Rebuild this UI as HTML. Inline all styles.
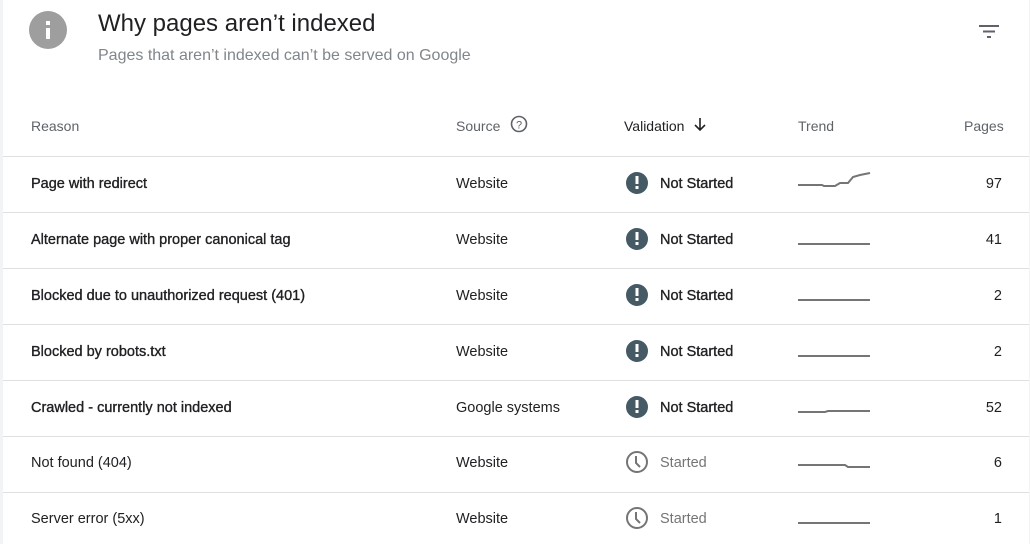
<!DOCTYPE html>
<html><head><meta charset="utf-8"><style>
*{margin:0;padding:0;box-sizing:border-box}
body{width:1030px;height:544px;background:#f1f3f4;font-family:"Liberation Sans",Arial,sans-serif;position:relative;overflow:hidden}
.card{position:absolute;left:3px;top:0;width:1026px;height:544px;background:#fff}
.t{position:absolute;white-space:nowrap;line-height:1}
.h{font-size:14px;color:#5f6368}
.r{font-size:14.5px;color:#202124}
.b{color:#202124;-webkit-text-stroke:0.35px #202124}
.g{color:#757575}
svg{position:absolute;left:0;top:0}
</style></head><body>
<div class="card"></div>
<svg width="1030" height="544">
<circle cx="48" cy="30" r="19" fill="#9e9e9e"/>
<rect x="46" y="28" width="4" height="11" fill="#fff"/>
<rect x="46" y="21" width="4" height="4" fill="#fff"/>
<g fill="#5f6368"><rect x="979" y="25" width="20" height="2"/><rect x="983" y="30.5" width="12" height="2"/><rect x="987" y="36" width="4" height="2"/></g>
<circle cx="519" cy="124" r="7.5" fill="none" stroke="#5f6368" stroke-width="1.6"/>
<text x="519" y="128.5" font-size="11" fill="#5f6368" text-anchor="middle" font-family="Liberation Sans">?</text>
<path d="M700 118v12M695 125l5 5 5-5" fill="none" stroke="#202124" stroke-width="1.6"/>
<g fill="#e0e0e0">
<rect x="3" y="156" width="1026" height="1"/><rect x="3" y="212" width="1026" height="1"/><rect x="3" y="268" width="1026" height="1"/><rect x="3" y="324" width="1026" height="1"/><rect x="3" y="380" width="1026" height="1"/><rect x="3" y="436" width="1026" height="1"/><rect x="3" y="492" width="1026" height="1"/>
</g>
<g>
<circle cx="637" cy="183" r="11" fill="#455a64"/><circle cx="637" cy="239" r="11" fill="#455a64"/><circle cx="637" cy="295" r="11" fill="#455a64"/><circle cx="637" cy="351" r="11" fill="#455a64"/><circle cx="637" cy="407" r="11" fill="#455a64"/>
</g>
<g fill="#fff">
<rect x="635.5" y="176" width="3" height="8"/><rect x="635.5" y="186" width="3" height="3"/>
<rect x="635.5" y="232" width="3" height="8"/><rect x="635.5" y="242" width="3" height="3"/>
<rect x="635.5" y="288" width="3" height="8"/><rect x="635.5" y="298" width="3" height="3"/>
<rect x="635.5" y="344" width="3" height="8"/><rect x="635.5" y="354" width="3" height="3"/>
<rect x="635.5" y="400" width="3" height="8"/><rect x="635.5" y="410" width="3" height="3"/>
</g>
<g fill="none" stroke="#757575" stroke-width="2">
<circle cx="637" cy="462" r="10"/><path d="M636 456v7l4 4"/>
<circle cx="637" cy="518" r="10"/><path d="M636 512v7l4 4"/>
</g>
<g fill="none" stroke="#757575" stroke-width="2">
<path d="M798 185H822L824 186H835L840 183H848L853 177L860 175L870 173"/>
<path d="M798 244H870"/>
<path d="M798 300H870"/>
<path d="M798 356H870"/>
<path d="M798 412H825L828 411H870"/>
<path d="M798 465H845L848 467H870"/>
<path d="M798 523H870"/>
</g>
</svg>
<div class="t" style="left:98px;top:12px;font-size:24px;color:#202124">Why pages aren’t indexed</div>
<div class="t" style="left:98px;top:48px;font-size:16px;color:#80868b">Pages that aren’t indexed can’t be served on Google</div>

<div class="t h" style="left:31px;top:119px">Reason</div>
<div class="t h" style="left:456px;top:119px">Source</div>
<div class="t h" style="left:624px;top:119px;color:#202124">Validation</div>
<div class="t h" style="left:798px;top:119px">Trend</div>
<div class="t h" style="left:964px;top:119px">Pages</div>

<div class="t r b" style="left:31px;top:177px">Page with redirect</div>
<div class="t r b" style="left:31px;top:233px">Alternate page with proper canonical tag</div>
<div class="t r b" style="left:31px;top:289px">Blocked due to unauthorized request (401)</div>
<div class="t r b" style="left:31px;top:345px">Blocked by robots.txt</div>
<div class="t r b" style="left:31px;top:401px">Crawled - currently not indexed</div>
<div class="t r" style="left:31px;top:456px">Not found (404)</div>
<div class="t r" style="left:31px;top:512px">Server error (5xx)</div>

<div class="t r" style="left:456px;top:177px">Website</div>
<div class="t r" style="left:456px;top:233px">Website</div>
<div class="t r" style="left:456px;top:289px">Website</div>
<div class="t r" style="left:456px;top:345px">Website</div>
<div class="t r" style="left:456px;top:401px">Google systems</div>
<div class="t r" style="left:456px;top:456px">Website</div>
<div class="t r" style="left:456px;top:512px">Website</div>

<div class="t r b" style="left:660px;top:177px">Not Started</div>
<div class="t r b" style="left:660px;top:233px">Not Started</div>
<div class="t r b" style="left:660px;top:289px">Not Started</div>
<div class="t r b" style="left:660px;top:345px">Not Started</div>
<div class="t r b" style="left:660px;top:401px">Not Started</div>
<div class="t r g" style="left:660px;top:456px">Started</div>
<div class="t r g" style="left:660px;top:512px">Started</div>

<div class="t r" style="right:28px;top:177px">97</div>
<div class="t r" style="right:28px;top:233px">41</div>
<div class="t r" style="right:28px;top:289px">2</div>
<div class="t r" style="right:28px;top:345px">2</div>
<div class="t r" style="right:28px;top:401px">52</div>
<div class="t r" style="right:28px;top:456px">6</div>
<div class="t r" style="right:28px;top:512px">1</div>
</body></html>
